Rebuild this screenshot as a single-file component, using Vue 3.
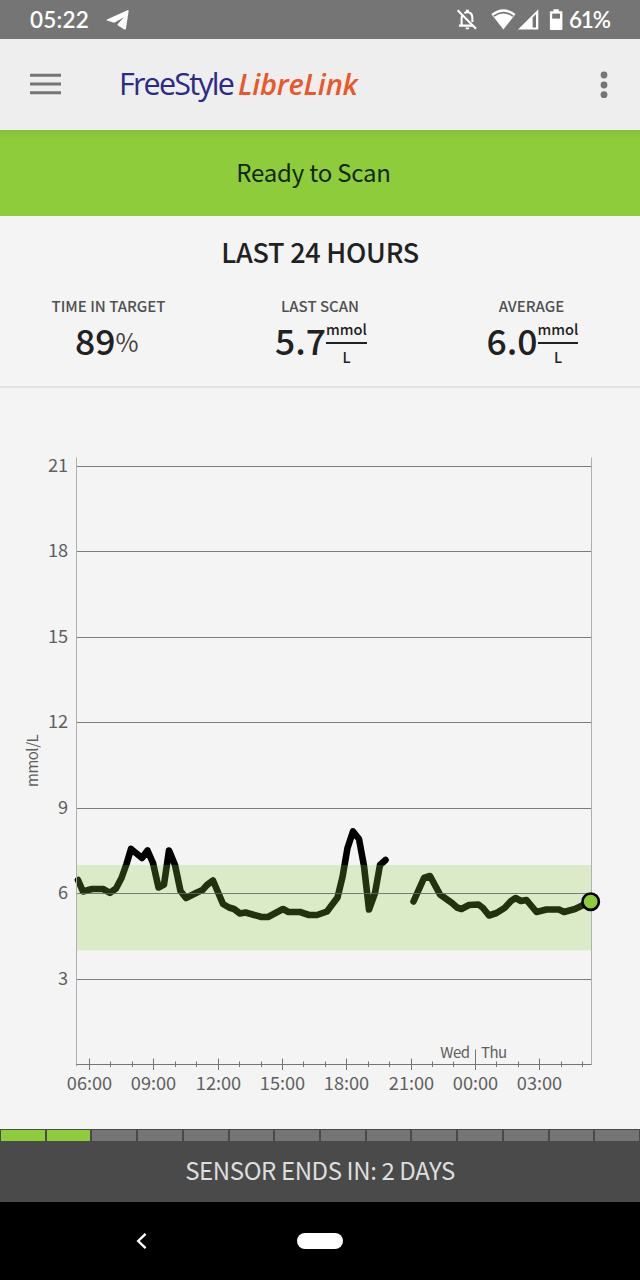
<script setup>
import { computed } from 'vue';

const stats = [
  { label: 'TIME IN TARGET', value: '89', percent: true },
  { label: 'LAST SCAN', value: '5.7', percent: false },
  { label: 'AVERAGE', value: '6.0', percent: false },
];

const SENSOR_DAYS = 14;
const daysLeft = 2;

// plot area
const LEFT = 76.5;
const RIGHT = 591.5;
const BASE = 1064.5;
const UNIT = 28.48;
const HOUR = 21.44;

const toY = (value) => BASE - value * UNIT;
const toX = (hour) => 89.5 + (hour - 6) * HOUR;

const levels = [21, 18, 15, 12, 9, 6, 3].map((value) => ({ value, y: Math.round(toY(value) - 0.5) + 0.5 }));

const hourTicks = computed(() => {
  const ticks = [];
  for (let hour = 6; hour <= 29; hour += 1) {
    ticks.push({
      x: Math.round(toX(hour) - 0.5) + 0.5,
      major: hour % 3 === 0,
      midnight: hour === 24,
      label: `${String(hour % 24).padStart(2, '0')}:00`,
    });
  }
  return ticks;
});

const majorTicks = computed(() => hourTicks.value.filter((tick) => tick.major));

const traces = [
  [
    [78, 880], [83, 891.5], [92, 889], [103, 889], [110, 892.8], [116, 888.5], [121.5, 878], [126.5, 864],
    [131, 849], [142, 858], [147.5, 850.5], [153, 863], [158.5, 887.5], [164, 884.5], [169, 850.5],
    [175, 865], [180.5, 891], [186, 898], [197, 892.5], [202.5, 890], [207, 885], [213, 880.5],
    [223, 904], [229, 907.5], [234, 909], [240, 913.5], [245.5, 912.5], [261.5, 917], [268, 917],
    [283, 909], [288.5, 912], [300, 912], [309, 915], [317, 915], [327, 911.5], [337.5, 897.5],
    [342.5, 877], [347.5, 848], [353, 831.5], [359, 839], [364, 866], [369, 909.5], [375, 893],
    [380, 865], [385.5, 860],
  ],
  [
    [413.5, 901.5], [424, 878], [430, 876], [440, 894.5], [452, 903], [457, 907.5], [461.5, 909],
    [469, 905], [478.5, 904.5], [483, 908], [489, 915.5], [496.5, 913], [504.5, 908], [511, 901],
    [515.5, 898], [521, 901], [526.5, 900], [536.5, 912], [546.5, 909.5], [559, 909.5], [564, 912],
    [575, 909], [590.5, 901.5],
  ],
];

const toPoints = (trace) => trace.map((point) => point.join(',')).join(' ');
</script>

<template>
  <div class="screen">
    <div class="status-bar">
      <span class="status-bar__time">05:22</span>
      <svg class="status-bar__telegram" width="24" height="22" viewBox="0 0 24 22">
        <path d="M1 10.5 21.5 1.2q1.3-.4 1.1 1L20 19.5q-.5 1.8-2 .8l-6-3.8q-1.2-.8 0-1.8l5.8-6.5-8.6 5q-1 .6-2 .3L1 11.4q-.9-.4 0-.9z" fill="#fff" />
      </svg>
      <svg class="status-bar__icons" width="110" height="24" viewBox="455 8 110 24">
        <g fill="none" stroke="#fff" stroke-width="2.1">
          <path d="M457.6 10.2 476 28.8" />
          <path d="M459 25.6h13.5M461.6 25.5v-7.2q0-1.6.9-3M464.4 13.2q1.2-.9 3-.9 5 0 5 6v3.6" />
        </g>
        <path d="M465.9 9.8h3v2.6h-3zM465.3 27.4h4.2q-.3 2-2.1 2t-2.1-2z" fill="#fff" />
        <path d="M491.3 14.1q12.1-9.6 24.2 0L503.4 29.5z" fill="#fff" />
        <path d="M493.8 16.1q9.6-6.9 19.2 0" fill="none" stroke="#757575" stroke-width="1.7" />
        <path d="M518 29.5 538.3 9.3v20.2z" fill="#fff" />
        <path d="M532.6 17.6 536 14.2v13.2h-3.4z" fill="#757575" />
        <path d="M553.4 9.2h5.4v2h2.8q.8 0 .8.8v17q0 1-.9 1h-10.7q-.9 0-.9-1V12q0-.8.8-.8h2.7z" fill="#fff" />
        <path d="M552.2 13.6h7.8v5h-7.8z" fill="#757575" />
      </svg>
      <span class="status-bar__battery">61%</span>
    </div>

    <header class="app-bar">
      <svg class="app-bar__menu" width="31" height="22" viewBox="0 0 31 22">
        <path d="M0 2.2h31M0 11h31M0 19.8h31" stroke="#757575" stroke-width="3" />
      </svg>
      <div class="app-bar__logo">
        <span class="logo-free">FreeStyle</span>
        <span class="logo-libre">LibreLink</span>
      </div>
      <svg class="app-bar__more" width="8" height="28" viewBox="0 0 8 28">
        <circle cx="4" cy="4" r="3.4" />
        <circle cx="4" cy="14" r="3.4" />
        <circle cx="4" cy="23.7" r="3.4" />
      </svg>
    </header>

    <div class="banner"><span class="banner__text">Ready to Scan</span></div>

    <section class="summary">
      <h1 class="summary__title">LAST 24 HOURS</h1>
      <div class="summary__row">
        <div v-for="stat in stats" :key="stat.label" class="stat">
          <div class="stat__label">{{ stat.label }}</div>
          <div class="stat__reading" :class="{ 'stat__reading--percent': stat.percent }">
            <span class="stat__value">{{ stat.value }}</span>
            <span v-if="stat.percent" class="stat__percent">%</span>
            <span v-else class="stat__unit">
              <span class="stat__numerator">mmol</span>
              <span class="stat__denominator">L</span>
            </span>
          </div>
        </div>
      </div>
    </section>

    <svg class="chart" width="640" height="741" viewBox="0 388 640 741">
      <polyline v-for="(trace, i) in traces" :key="i" class="chart__trace" :points="toPoints(trace)" />
      <rect class="chart__target" :x="LEFT" y="865" :width="RIGHT - LEFT" height="85.3" />

      <g v-for="level in levels" :key="level.value">
        <line class="chart__grid" :x1="LEFT" :x2="RIGHT" :y1="level.y" :y2="level.y" />
        <text class="chart__label" x="68.2" :y="level.y + 5.7" text-anchor="end">{{ level.value }}</text>
      </g>

      <path class="chart__side" :d="`M${LEFT} 457.5V${BASE + 2}M${RIGHT} 457.5V${BASE}`" />
      <line class="chart__axis" :x1="LEFT" :x2="RIGHT" :y1="BASE" :y2="BASE" />
      <line
        v-for="tick in hourTicks"
        :key="tick.x"
        class="chart__tick"
        :x1="tick.x"
        :x2="tick.x"
        :y1="tick.midnight ? 1049.5 : tick.major ? 1058.5 : 1061.5"
        :y2="tick.major ? 1070 : 1067"
      />
      <text
        v-for="tick in majorTicks"
        :key="tick.label"
        class="chart__label"
        :x="tick.x"
        y="1090.3"
        text-anchor="middle"
      >{{ tick.label }}</text>

      <text class="chart__day" x="469.5" y="1058.3" text-anchor="end">Wed</text>
      <text class="chart__day" x="481" y="1058.3">Thu</text>
      <text class="chart__day" transform="translate(37.5 787) rotate(-90)">mmol/L</text>
      <circle class="chart__current" cx="590.7" cy="901.7" r="8.2" />
    </svg>

    <div class="sensor-days">
      <span
        v-for="day in SENSOR_DAYS"
        :key="day"
        class="sensor-days__day"
        :class="{ 'sensor-days__day--left': day <= daysLeft }"
      ></span>
    </div>
    <div class="sensor-status"><span>SENSOR ENDS IN: 2 DAYS</span></div>

    <nav class="nav-bar">
      <svg class="nav-bar__back" width="12" height="18" viewBox="0 0 12 18">
        <path d="M9.6 1.8 2.2 9l7.4 7.2" fill="none" stroke="#fff" stroke-width="2.4" />
      </svg>
      <span class="nav-bar__home"></span>
    </nav>
  </div>
</template>

<style>
body {
  margin: 0;
  background: #f4f4f4;
}
</style>

<style scoped>
.screen {
  width: 640px;
  height: 1280px;
  display: flex;
  flex-direction: column;
  overflow: hidden;
  background: #f4f4f4;
  color: #212121;
  font-family: 'Noto Sans CJK SC', sans-serif;
}

.status-bar {
  height: 39px;
  flex: none;
  box-sizing: border-box;
  padding: 0 30px;
  display: flex;
  align-items: center;
  background: #757575;
  color: #fff;
  font-family: Lato, sans-serif;
  font-size: 22.5px;
  font-weight: 600;
}

.status-bar__time {
  width: 76px;
  letter-spacing: 0.25px;
}

.status-bar__icons {
  margin-left: auto;
}

.status-bar__battery {
  width: 41px;
  margin-left: 4px;
  letter-spacing: -1.2px;
}

.app-bar {
  height: 91px;
  flex: none;
  box-sizing: border-box;
  padding: 0 32px 0 30px;
  display: flex;
  align-items: center;
  background: #eee;
}

.app-bar__menu {
  margin-bottom: 1px;
}

.app-bar__logo {
  width: 250px;
  margin: 0 0 2px 58px;
  display: flex;
  align-items: baseline;
  font-family: 'Open Sans', sans-serif;
  line-height: 42px;
  white-space: nowrap;
}

.app-bar__more {
  margin-left: auto;
  fill: #757575;
}

.logo-free {
  width: 119px;
  font-size: 30.5px;
  letter-spacing: -1.8px;
  color: #2b2a86;
}

.logo-libre {
  font-size: 29px;
  font-style: italic;
  font-weight: 600;
  letter-spacing: -0.2px;
  color: #e9572b;
}

.banner {
  height: 86px;
  flex: none;
  box-sizing: border-box;
  padding: 0 13px 4px 0;
  display: flex;
  align-items: center;
  justify-content: center;
  background: linear-gradient(#84bf3b, #8fcc3b 9px);
  color: #10280c;
  font-size: 24px;
  letter-spacing: -0.2px;
}

.summary {
  height: 172px;
  flex: none;
  box-sizing: border-box;
  padding-top: 17px;
  border-bottom: 2px solid #e2e2e2;
}

.summary__title {
  margin: 0;
  font-size: 27px;
  line-height: 38px;
  font-weight: 500;
  letter-spacing: -0.25px;
  text-align: center;
}

.summary__row {
  margin-top: 23px;
  padding: 0 2px;
  display: grid;
  grid-template-columns: 213px 210px 213px;
}

.stat {
  text-align: center;
}

.stat__label {
  font-size: 15px;
  line-height: 24px;
  font-weight: 500;
  color: #505050;
}

.stat__reading {
  height: 48px;
  padding-left: 2px;
  display: flex;
  align-items: center;
  justify-content: center;
}

.stat__reading--percent {
  padding: 0 4px 0 0;
}

.stat__value {
  padding-bottom: 5px;
  font-size: 35.5px;
  line-height: 45px;
  font-weight: 500;
}

.stat__percent {
  padding-bottom: 2px;
  font-size: 25px;
  line-height: 46px;
  letter-spacing: -0.5px;
  color: #444;
}

.stat__unit {
  display: flex;
  flex-direction: column;
  font-size: 14.6px;
  line-height: 26px;
  font-weight: 500;
}

.stat__numerator {
  border-bottom: 2px solid #212121;
}

.stat__denominator {
  line-height: 25px;
}

.chart {
  display: block;
  flex: none;
}

.chart__trace {
  fill: none;
  stroke: #000;
  stroke-width: 6.6;
  stroke-linecap: round;
  stroke-linejoin: round;
}

.chart__target {
  fill: #8fcc3a;
  fill-opacity: 0.24;
}

.chart__grid {
  stroke: #666;
  stroke-opacity: 0.85;
}

.chart__side {
  fill: none;
  stroke: #b0b0b0;
}

.chart__axis,
.chart__tick {
  stroke: #757575;
}

.chart__label {
  font-size: 18.2px;
  fill: #606060;
}

.chart__day {
  font-size: 15px;
  letter-spacing: -0.5px;
  fill: #606060;
}

.chart__current {
  fill: #8fcc3b;
  stroke: #000;
  stroke-width: 2.6;
}

.sensor-days {
  height: 12px;
  flex: none;
  box-sizing: border-box;
  padding: 1px 1px 0;
  display: grid;
  grid-template-columns: repeat(14, 1fr);
  gap: 2px;
  background: #4a4a4a;
}

.sensor-days__day {
  background: #757575;
}

.sensor-days__day--left {
  background: #8fcc3b;
}

.sensor-status {
  height: 61px;
  flex: none;
  box-sizing: border-box;
  padding-bottom: 4px;
  display: flex;
  align-items: center;
  justify-content: center;
  background: #4a4a4a;
  color: #dedede;
  font-size: 24px;
  letter-spacing: -0.4px;
}

.nav-bar {
  flex: 1;
  padding-left: 136px;
  display: flex;
  align-items: center;
  background: #000;
}

.nav-bar__home {
  width: 46px;
  height: 16px;
  margin-left: 149px;
  border-radius: 8px;
  background: #fff;
}
</style>
